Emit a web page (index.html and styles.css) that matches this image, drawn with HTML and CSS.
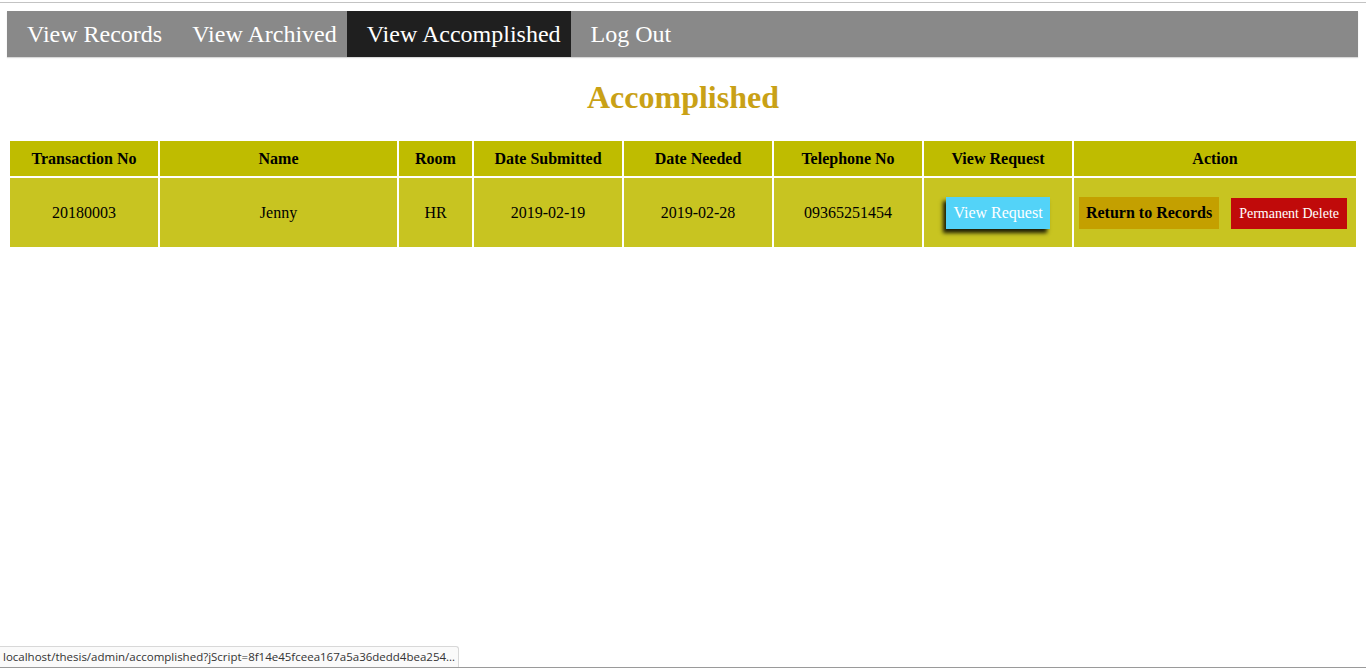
FILE: index.html
```html
<!DOCTYPE html>
<html>
<head>
<meta charset="utf-8">
<title>Accomplished</title>
<link rel="stylesheet" href="styles.css">
</head>
<body>
<div class="chrome-top"></div>
<div class="page">
  <nav class="topnav">
    <a href="#" class="nav-link">View Records</a>
    <a href="#" class="nav-link">View Archived</a>
    <a href="#" class="nav-link active">View Accomplished</a>
    <a href="#" class="nav-link">Log Out</a>
  </nav>
  <h1 class="title">Accomplished</h1>
  <table class="records">
    <thead>
      <tr>
        <th class="c-trans">Transaction No</th>
        <th class="c-name">Name</th>
        <th class="c-room">Room</th>
        <th class="c-date">Date Submitted</th>
        <th class="c-date">Date Needed</th>
        <th class="c-date">Telephone No</th>
        <th class="c-date">View Request</th>
        <th>Action</th>
      </tr>
    </thead>
    <tbody>
      <tr>
        <td>20180003</td>
        <td>Jenny</td>
        <td>HR</td>
        <td>2019-02-19</td>
        <td>2019-02-28</td>
        <td>09365251454</td>
        <td><a href="#" class="btn btn-view">View Request</a></td>
        <td class="actions"><a href="#" class="btn btn-return">Return to Records</a><a href="#" class="btn btn-delete">Permanent Delete</a></td>
      </tr>
    </tbody>
  </table>
</div>
<div class="statusbar">localhost/thesis/admin/accomplished?jScript=8f14e45fceea167a5a36dedd4bea254...</div>
<div class="chrome-bottom"></div>
</body>
</html>
```
FILE: styles.css
```css
html, body {
  margin: 0;
  padding: 0;
  background: #fff;
  font-family: "Liberation Serif", "Times New Roman", serif;
}
.chrome-top {
  height: 2px;
  border-bottom: 1px solid #c3c3c3;
}
.page {
  padding: 8px 8px 0 8px;
}
.topnav {
  display: flex;
  height: 46px;
  background: #898989;
  margin-left: -1px;
  box-shadow: 0 1px 1px rgba(0,0,0,0.15);
}
.nav-link {
  display: flex;
  align-items: center;
  padding: 0 10px 0 20px;
  color: #fff;
  text-decoration: none;
  font-size: 24px;
}
.nav-link.active {
  background: #1f1f1f;
}
.title {
  text-align: center;
  color: #c9a116;
  font-size: 32px;
  font-weight: bold;
  margin: 22px 0 23px 0;
  line-height: 37px;
}
.records {
  width: 100%;
  border-spacing: 2px;
  font-size: 16px;
  color: #000;
}
.records th {
  background: #bfbc00;
  height: 35px;
  padding: 0;
  font-weight: bold;
}
.records td {
  background: #c8c421;
  height: 69px;
  padding: 0;
  text-align: center;
}
.c-trans { width: 148px; }
.c-name { width: 237px; }
.c-room { width: 73px; }
.c-date { width: 148px; }
.btn {
  display: inline-block;
  text-decoration: none;
  font-size: 16px;
  line-height: 32px;
  height: 32px;
}
.btn-view {
  background: #53d3f8;
  color: #fff;
  padding: 0 7px;
  box-shadow: -3px 4px 4px rgba(0,0,0,0.85);
}
.actions {
  white-space: nowrap;
}
.btn-return {
  background: #c4a000;
  color: #000;
  font-weight: bold;
  padding: 0 7px;
  margin-right: 12px;
}
.btn-delete {
  background: #c00a0a;
  color: #fff;
  font-size: 14px;
  padding: 0 8px;
  margin-right: 4px;
  height: 31px;
  line-height: 31px;
}
.statusbar {
  position: fixed;
  left: 0;
  bottom: 2px;
  height: 20px;
  line-height: 20px;
  padding: 0 3px;
  background: #fafafa;
  border: 1px solid #d8d8d8;
  border-left: none;
  border-bottom: none;
  border-radius: 0 3px 0 0;
  font-family: "Open Sans", "Noto Sans", sans-serif;
  font-size: 11.5px;
  color: #333;
}
.chrome-bottom {
  position: fixed;
  left: 0;
  right: 0;
  bottom: 0;
  height: 1px;
  border-top: 1px solid #9a9a9a;
  background: #fff;
}
```
